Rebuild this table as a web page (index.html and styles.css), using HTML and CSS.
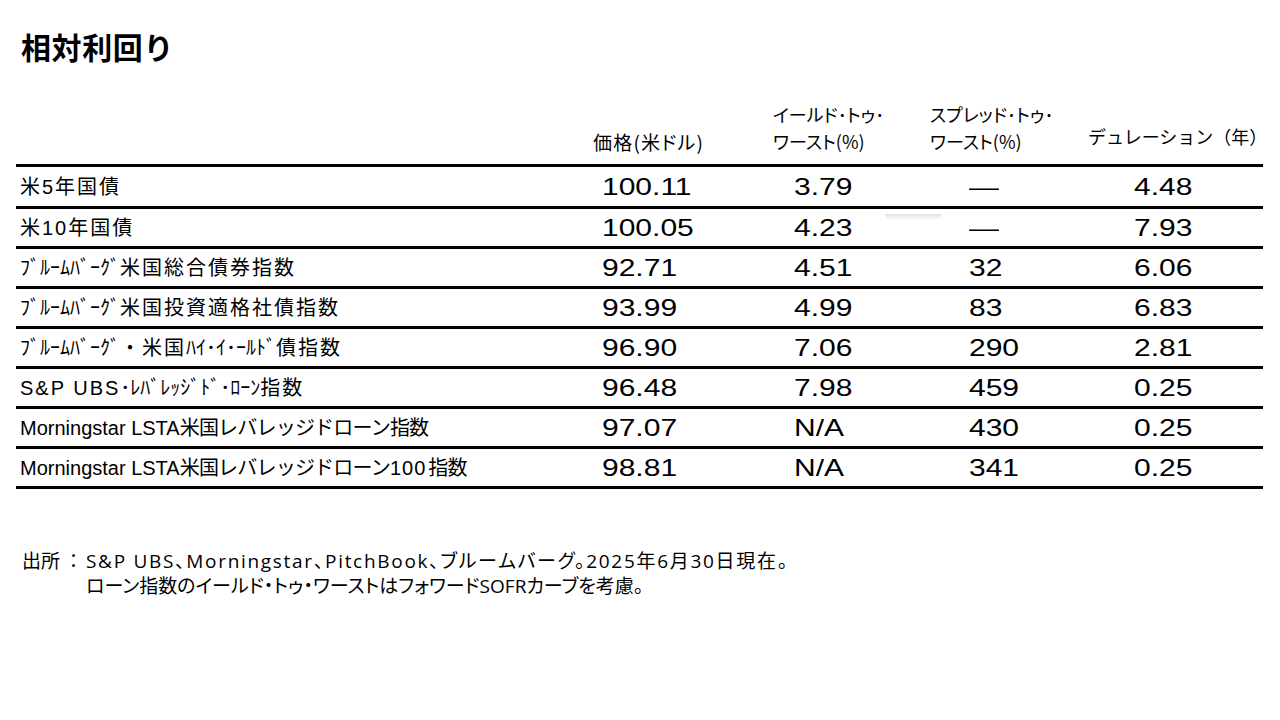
FILE: index.html
```html
<!DOCTYPE html>
<html lang="ja">
<head>
<meta charset="utf-8">
<title>相対利回り</title>
<link rel="stylesheet" href="styles.css">
</head>
<body>
<div class="page">
  <h1 class="title">相対利回り</h1>
  <div class="table">
    <div class="head">
      <div class="hcell"></div>
      <div class="hcell price">価格(米ドル)</div>
      <div class="hcell">イールド･トゥ･<br>ワースト(%)</div>
      <div class="hcell">スプレッド･トゥ･<br>ワースト(%)</div>
      <div class="hcell dur">デュレーション（年）</div>
    </div>
    <div class="row first">
      <div class="label"><span class="w">米5年国債</span></div>
      <div class="num c2"><span>100.11</span></div>
      <div class="num c3"><span>3.79</span></div>
      <div class="num c4"><span>—</span></div>
      <div class="num c5"><span>4.48</span></div>
    </div>
    <div class="row">
      <div class="label"><span class="w">米10年国債</span></div>
      <div class="num c2"><span>100.05</span></div>
      <div class="num c3 smudge"><span>4.23</span></div>
      <div class="num c4"><span>—</span></div>
      <div class="num c5"><span>7.93</span></div>
    </div>
    <div class="row">
      <div class="label">ﾌﾞﾙｰﾑﾊﾞｰｸﾞ<span class="w">米国総合債券指数</span></div>
      <div class="num c2"><span>92.71</span></div>
      <div class="num c3"><span>4.51</span></div>
      <div class="num c4"><span>32</span></div>
      <div class="num c5"><span>6.06</span></div>
    </div>
    <div class="row">
      <div class="label">ﾌﾞﾙｰﾑﾊﾞｰｸﾞ<span class="w">米国投資適格社債指数</span></div>
      <div class="num c2"><span>93.99</span></div>
      <div class="num c3"><span>4.99</span></div>
      <div class="num c4"><span>83</span></div>
      <div class="num c5"><span>6.83</span></div>
    </div>
    <div class="row">
      <div class="label">ﾌﾞﾙｰﾑﾊﾞｰｸﾞ<span class="w">・米国</span>ﾊｲ･ｲ･ｰﾙﾄﾞ<span class="w">債指数</span></div>
      <div class="num c2"><span>96.90</span></div>
      <div class="num c3"><span>7.06</span></div>
      <div class="num c4"><span>290</span></div>
      <div class="num c5"><span>2.81</span></div>
    </div>
    <div class="row">
      <div class="label"><span class="lat">S&amp;P UBS</span>･ﾚﾊﾞﾚｯｼﾞﾄﾞ･ﾛｰﾝ<span class="w">指数</span></div>
      <div class="num c2"><span>96.48</span></div>
      <div class="num c3"><span>7.98</span></div>
      <div class="num c4"><span>459</span></div>
      <div class="num c5"><span>0.25</span></div>
    </div>
    <div class="row">
      <div class="label">Morningstar LSTA<span class="n">米国レバレッジドローン指数</span></div>
      <div class="num c2"><span>97.07</span></div>
      <div class="num c3"><span>N/A</span></div>
      <div class="num c4"><span>430</span></div>
      <div class="num c5"><span>0.25</span></div>
    </div>
    <div class="row last">
      <div class="label">Morningstar LSTA<span class="n">米国レバレッジドローン</span><span class="d">100</span><span class="n">指数</span></div>
      <div class="num c2"><span>98.81</span></div>
      <div class="num c3"><span>N/A</span></div>
      <div class="num c4"><span>341</span></div>
      <div class="num c5"><span>0.25</span></div>
    </div>
  </div>
  <div class="note">
    <div class="note-key">出所<span class="colon">：</span></div>
    <div class="note-body">
      <div class="note-l1">S&amp;P UBS、Morningstar、PitchBook、ブルームバーグ。2025年6月30日現在。</div>
      <div>ローン指数のイールド・トゥ・ワーストはフォワードSOFRカーブを考慮。</div>
    </div>
  </div>
</div>
</body>
</html>
```
FILE: styles.css
```css
html, body {
  margin: 0;
  padding: 0;
  background: #ffffff;
}

body {
  width: 1280px;
  height: 720px;
  overflow: hidden;
  color: #000000;
  font-family: "Noto Sans CJK JP", "Noto Sans", sans-serif;
}

.page {
  padding: 28px 0 0 0;
}

.title {
  margin: 0 0 0 21px;
  font-size: 30px;
  line-height: 36px;
  font-weight: 700;
  letter-spacing: 0.6px;
}

.table {
  margin: 37px 0 0 16px;
  width: 1247px;
}

.head,
.row {
  display: grid;
  grid-template-columns: 577px 180px 157px 158px 175px;
}

.head {
  align-items: end;
  padding-bottom: 9px;
}

.hcell {
  font-size: 18px;
  line-height: 27px;
  font-feature-settings: "palt";
}

.hcell.price {
  font-size: 19px;
  letter-spacing: 1.2px;
}

.hcell.dur {
  padding-bottom: 5px;
  font-feature-settings: normal;
}

.row {
  border-top: 3px solid #000000;
  height: 37px;
  align-items: center;
}

.row.first {
  height: 39px;
}

.row.last {
  border-bottom: 3px solid #000000;
}

.label {
  padding-left: 4px;
  font-family: "Liberation Sans", "Noto Sans CJK JP", sans-serif;
  font-size: 20px;
  line-height: 24px;
  white-space: nowrap;
}

.label .w {
  letter-spacing: 2px;
}

.label .n {
  letter-spacing: -0.8px;
}

.label .d {
  letter-spacing: 1px;
  padding-right: 2px;
}

.label .lat {
  letter-spacing: 2px;
}

.num {
  font-family: "Liberation Sans", Arial, sans-serif;
  font-size: 24px;
  line-height: 28px;
}

.num span {
  display: inline-block;
  transform: scaleX(1.25);
  transform-origin: left center;
}

.smudge {
  position: relative;
}

.smudge::before {
  content: "";
  position: absolute;
  left: 112px;
  top: 0;
  width: 56px;
  height: 6px;
  background: linear-gradient(to bottom, rgba(0, 0, 0, 0.12), rgba(0, 0, 0, 0));
  border-radius: 0 0 6px 6px;
}

.c2 { padding-left: 9px; }
.c3 { padding-left: 21px; }
.c4 { padding-left: 39px; }
.c5 { padding-left: 46px; }

.note {
  display: flex;
  margin: 60px 0 0 22px;
  font-family: "Open Sans", "Noto Sans CJK JP", sans-serif;
  font-size: 19px;
  line-height: 25px;
  font-feature-settings: "palt";
}

.note-key {
  width: 64px;
  flex: none;
  font-feature-settings: normal;
}

.note-key .colon {
  display: inline-block;
  margin-left: 4px;
}

.note-l1 {
  letter-spacing: 1.7px;
}
```
